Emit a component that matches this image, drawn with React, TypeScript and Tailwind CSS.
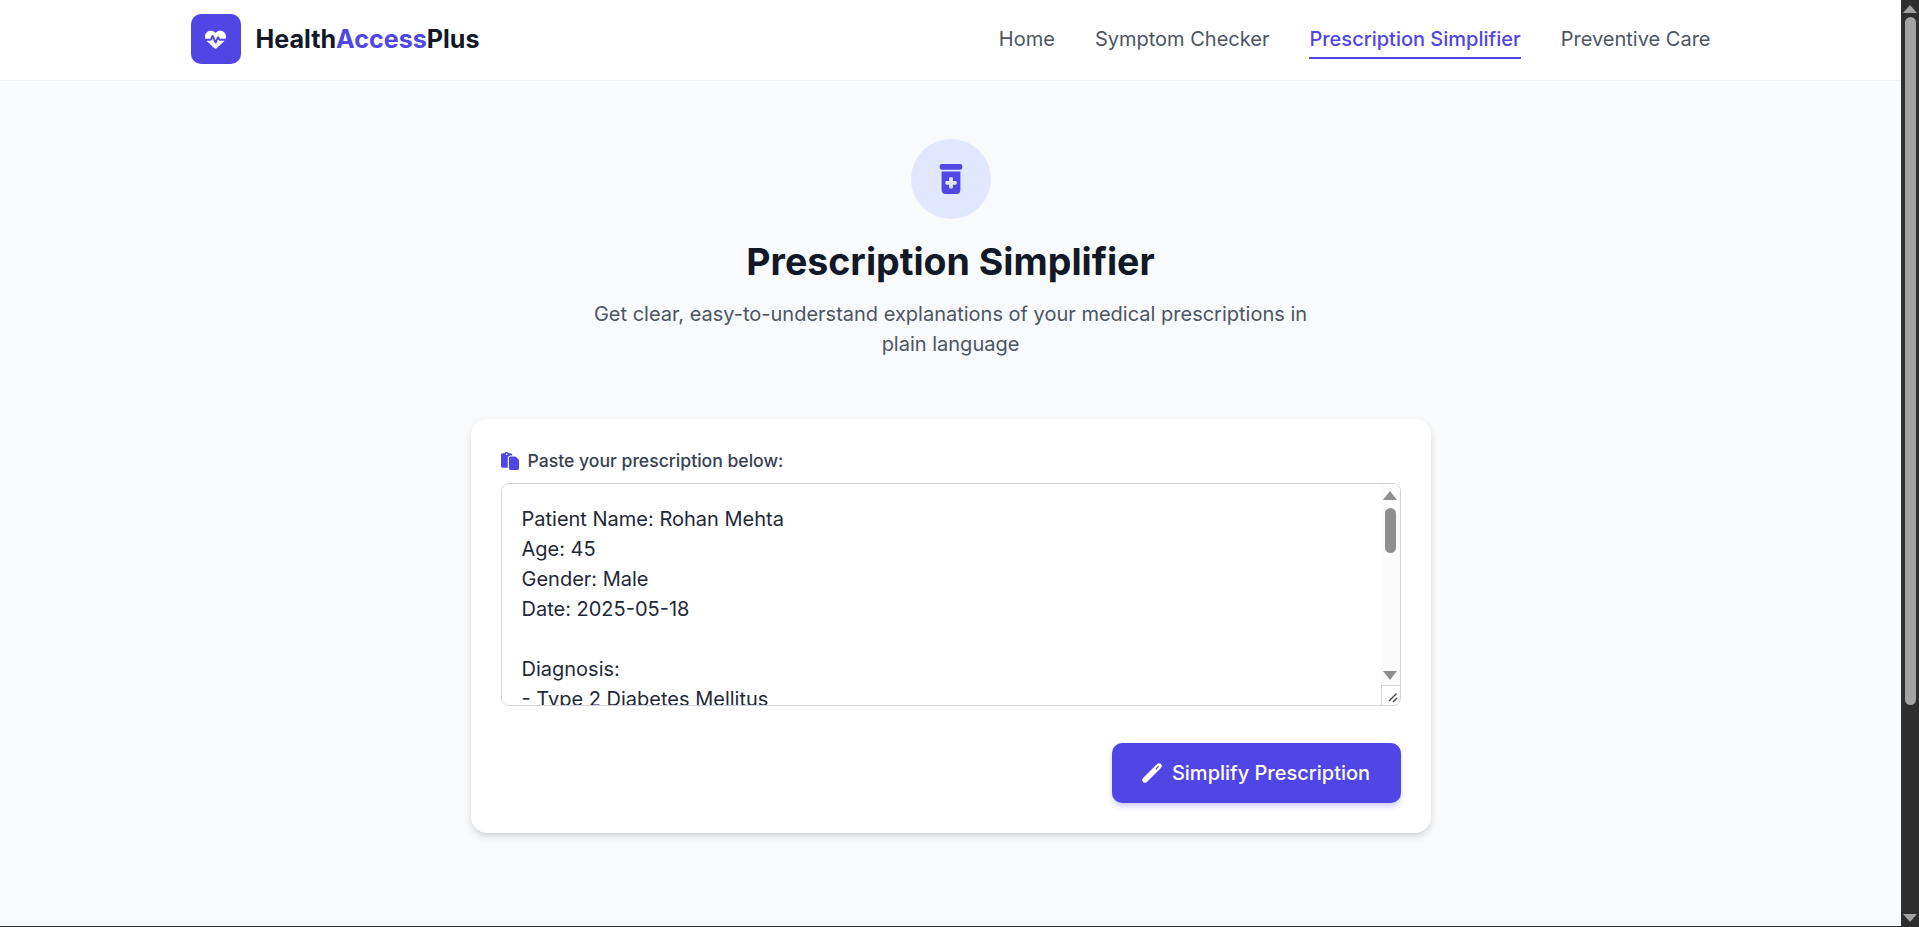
import { FaHeartPulse, FaPrescriptionBottleMedical, FaPaste } from "react-icons/fa6";

const text = `Patient Name: Rohan Mehta
Age: 45
Gender: Male
Date: 2025-05-18

Diagnosis:
- Type 2 Diabetes Mellitus
- Hypertension

Medications:
1. Metformin 500 mg - twice daily after meals
2. Amlodipine 5 mg - once daily in the morning
3. Atorvastatin 10 mg - once daily at bedtime

Advice:
- Follow a low-sugar, low-salt diet
- Walk for 30 minutes daily
- Review after 4 weeks`;

function NavLink({ label, active }: { label: string; active?: boolean }) {
  return (
    <a
      className={
        active
          ? "border-b-2 border-[#4f46e5] pb-1 text-[20px] font-medium leading-[27px] text-[#4f46e5]"
          : "border-b-2 border-transparent pb-1 text-[20px] font-normal leading-[27px] text-[#4b5563]"
      }
    >
      {label}
    </a>
  );
}

export default function App() {
  return (
    <div className="flex h-[927px] overflow-hidden bg-[#f9fafb] font-['Inter',sans-serif]">
      <div className="flex min-w-0 flex-1 flex-col">
        <header className="h-[81px] shrink-0 border-b border-[#f0f1f3] bg-white">
          <div className="mx-auto flex h-[78px] w-[1520px] items-center justify-between">
            <div className="flex items-center gap-[15px]">
              <div className="flex h-[50px] w-[50px] items-center justify-center rounded-[10px] bg-[#4f46e5] text-[21px] text-white">
                <FaHeartPulse />
              </div>
              <div className="text-[25.1px] font-bold leading-9 text-[#111827]">
                Health<span className="text-[#4f46e5]">Access</span>Plus
              </div>
            </div>
            <nav className="flex items-center gap-10 pt-[7px]">
              <NavLink label="Home" />
              <NavLink label="Symptom Checker" />
              <NavLink label="Prescription Simplifier" active />
              <NavLink label="Preventive Care" />
            </nav>
          </div>
        </header>
        <main className="flex flex-1 flex-col items-center pt-[58px]">
          <div className="flex h-20 w-20 items-center justify-center rounded-full bg-[#e0e7ff] text-[30px] text-[#4f46e5]">
            <FaPrescriptionBottleMedical />
          </div>
          <h1 className="mt-4 text-[37.5px] font-bold leading-[54px] text-[#111827]">Prescription Simplifier</h1>
          <p className="mt-[10px] w-[720px] text-center text-[20px] leading-[30px] text-[#4b5563]">
            Get clear, easy-to-understand explanations of your medical prescriptions in plain language
          </p>
          <section className="mt-[60px] w-[960px] rounded-2xl bg-white p-[30px] shadow-[0_4px_10px_-1px_rgba(0,0,0,0.14),0_2px_4px_-2px_rgba(0,0,0,0.1)]">
            <label className="flex items-center gap-[9px] text-[17.6px] font-medium leading-6 text-[#374151]">
              <FaPaste className="text-[18px] text-[#4f46e5]" />
              Paste your prescription below:
            </label>
            <div className="relative mt-[10px] h-[223px] w-full overflow-hidden rounded-lg border border-[#d1d5db] bg-white">
              <textarea
                readOnly
                defaultValue={text}
                className="block h-full w-full resize-none overflow-hidden bg-white py-5 pl-5 pr-6 text-[20px] leading-[30px] text-[#1f2937] outline-none"
              />
              <div className="absolute inset-y-0 right-0 flex w-[19px] flex-col items-center bg-[#fbfbfb] pt-[7px]">
                <div className="h-0 w-0 border-x-[7px] border-b-[9px] border-x-transparent border-b-[#8f8f8f]" />
                <div className="mt-[8px] h-[45px] w-[11px] rounded-full bg-[#8f8f8f]" />
                <div className="mt-[118px] h-0 w-0 border-x-[7px] border-t-[9px] border-x-transparent border-t-[#8f8f8f]" />
              </div>
              <div className="absolute bottom-0 right-0 h-[20px] w-[19px] border-l border-t border-[#d1d5db] bg-white">
                <svg width="18" height="19" viewBox="0 0 18 19" stroke="#444" strokeWidth="1.4" fill="none">
                  <path d="M7 15 14.5 7.5M11 16 15 12" />
                </svg>
              </div>
            </div>
            <div className="mt-[37px] flex justify-end">
              <button className="flex h-[60px] w-[289px] items-center justify-center gap-[10px] rounded-[10px] bg-[#4f46e5] text-[20px] font-medium text-white shadow-[0_4px_6px_-1px_rgba(79,70,229,0.3)]">
                <svg width="20" height="20" viewBox="0 0 20 20" fill="none" strokeLinecap="round">
                  <path d="M3 17 17 3" stroke="#ffffff" strokeWidth="5.4" />
                  <path d="M14.2 5.8 16.3 3.7" stroke="#4f46e5" strokeWidth="1.2" />
                </svg>
                Simplify Prescription
              </button>
            </div>
          </section>
        </main>
        <div className="h-px shrink-0 bg-[#2b2b2b]" />
      </div>
      <aside className="flex w-[18px] shrink-0 flex-col items-center bg-[#2e2e2e] pt-[5px]">
        <div className="h-0 w-0 border-x-[7px] border-b-[8px] border-x-transparent border-b-[#a3a3a3]" />
        <div className="mt-[4px] h-[688px] w-[11px] rounded-full bg-[#a3a3a3]" />
        <div className="flex-1" />
        <div className="mb-[5px] h-0 w-0 border-x-[7px] border-t-[8px] border-x-transparent border-t-[#a3a3a3]" />
      </aside>
    </div>
  );
}
